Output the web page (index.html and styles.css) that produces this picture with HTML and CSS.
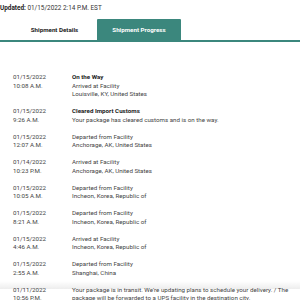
FILE: index.html
```html
<!DOCTYPE html>
<html>
<head>
<meta charset="utf-8">
<link rel="stylesheet" href="styles.css">
</head>
<body>
<div class="updated"><b>Updated:</b> 01/15/2022 2:14 P.M. EST</div>
<div class="tabs">
  <div class="tab">Shipment Details</div>
  <div class="tab active">Shipment Progress</div>
</div>
<div class="list">
  <div class="row">
    <div class="when"><div>01/15/2022</div><div>10:08 A.M.</div></div>
    <div class="what"><div class="status">On the Way</div><div>Arrived at Facility</div><div>Louisville, KY, United States</div></div>
  </div>
  <div class="row">
    <div class="when"><div>01/15/2022</div><div>9:26 A.M.</div></div>
    <div class="what"><div class="status">Cleared Import Customs</div><div>Your package has cleared customs and is on the way.</div></div>
  </div>
  <div class="row">
    <div class="when"><div>01/15/2022</div><div>12:07 A.M.</div></div>
    <div class="what"><div>Departed from Facility</div><div>Anchorage, AK, United States</div></div>
  </div>
  <div class="row">
    <div class="when"><div>01/14/2022</div><div>10:23 P.M.</div></div>
    <div class="what"><div>Arrived at Facility</div><div>Anchorage, AK, United States</div></div>
  </div>
  <div class="row">
    <div class="when"><div>01/15/2022</div><div>10:05 A.M.</div></div>
    <div class="what"><div>Departed from Facility</div><div>Incheon, Korea, Republic of</div></div>
  </div>
  <div class="row">
    <div class="when"><div>01/15/2022</div><div>8:21 A.M.</div></div>
    <div class="what"><div>Departed from Facility</div><div>Incheon, Korea, Republic of</div></div>
  </div>
  <div class="row">
    <div class="when"><div>01/15/2022</div><div>4:46 A.M.</div></div>
    <div class="what"><div>Arrived at Facility</div><div>Incheon, Korea, Republic of</div></div>
  </div>
  <div class="row">
    <div class="when"><div>01/15/2022</div><div>2:55 A.M.</div></div>
    <div class="what"><div>Departed from Facility</div><div>Shanghai, China</div></div>
  </div>
  <div class="row">
    <div class="when"><div>01/11/2022</div><div>10:56 P.M.</div></div>
    <div class="what"><div>Your package is in transit. We're updating plans to schedule your delivery. / The package will be forwarded to a UPS facility in the destination city.</div></div>
  </div>
</div>
<div class="fade"></div>
</body>
</html>
```
FILE: styles.css
```css
html, body {
  margin: 0;
  padding: 0;
  background: #fff;
}
body {
  font-family: Roboto, "Liberation Sans", sans-serif;
  color: #333;
  width: 300px;
  height: 300px;
  overflow: hidden;
  position: relative;
}
.updated {
  font-size: 6.4px;
  line-height: 8px;
  padding-top: 4px;
  color: #333;
}
.updated b {
  font-weight: 700;
  color: #222;
}
.tabs {
  display: flex;
  margin-top: 7px;
  padding-left: 12px;
  border-bottom: 2px solid #3b877d;
}
.tab {
  width: 85px;
  height: 21px;
  display: flex;
  align-items: center;
  justify-content: center;
  font-size: 6.2px;
  font-weight: 700;
  color: #222;
}
.tab.active {
  background: #3b877d;
  color: #fff;
  width: 84px;
  border-radius: 1px 1px 0 0;
}
.list {
  padding: 31px 0 0 13px;
  display: flex;
  flex-direction: column;
  gap: 8.5px;
  font-size: 6.2px;
  line-height: 8.5px;
}
.row {
  display: flex;
}
.when {
  width: 59px;
  flex: none;
  color: #444;
}
.what {
  width: 226px;
  color: #444;
}
.status {
  font-weight: 700;
  color: #222;
}
.fade {
  position: absolute;
  left: 0;
  right: 0;
  top: 281px;
  height: 8px;
  background: linear-gradient(to bottom, rgba(0,0,0,0), rgba(0,0,0,0.07));
}
```
